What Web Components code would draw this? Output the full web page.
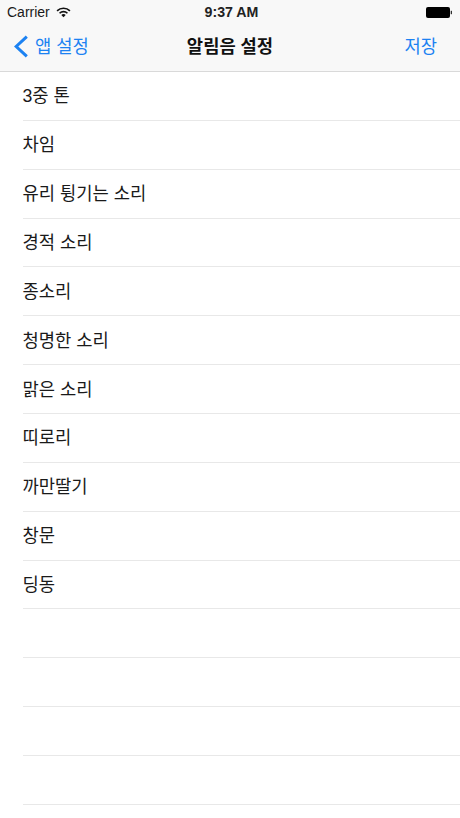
<!DOCTYPE html>
<html lang="ko">
<head>
<meta charset="utf-8">
<title>알림음 설정</title>
<style>
  html, body { margin: 0; height: 100%; background: #fff; overflow: hidden; }
  body { font-family: "Liberation Sans", "Noto Sans CJK KR", sans-serif; }
</style>
</head>
<body>
<nav-header title="알림음 설정" back="앱 설정" action="저장"></nav-header>
<sound-list>
  <sound-row>3중 톤</sound-row>
  <sound-row>차임</sound-row>
  <sound-row>유리 튕기는 소리</sound-row>
  <sound-row>경적 소리</sound-row>
  <sound-row>종소리</sound-row>
  <sound-row>청명한 소리</sound-row>
  <sound-row>맑은 소리</sound-row>
  <sound-row>띠로리</sound-row>
  <sound-row>까만딸기</sound-row>
  <sound-row>창문</sound-row>
  <sound-row>딩동</sound-row>
  <sound-row></sound-row>
  <sound-row></sound-row>
  <sound-row></sound-row>
  <sound-row></sound-row>
</sound-list>

<script>
class StatusBar extends HTMLElement {
  constructor(){
    super();
    this.attachShadow({mode: 'open'});
    this.shadowRoot.innerHTML = `
      <style>
        :host {
          display: grid;
          grid-template-columns: 1fr auto 1fr;
          align-items: center;
          height: 24px;
          padding: 0 8px 0 7px;
          font-size: 14px;
          color: #1a1a1a;
        }
        .left { display: flex; align-items: center; gap: 6px; }
        .time { font-weight: 700; font-size: 14.2px; color: #222; margin-left: 4px; }
        .right { display: flex; justify-content: flex-end; }
        svg { display: block; }
      </style>
      <div class="left">
        <span>Carrier</span>
        <svg width="15" height="11" viewBox="0 0 16 12">
          <path d="M1 4.2a10 10 0 0 1 14 0" fill="none" stroke="#111" stroke-width="1.8"/>
          <path d="M3.7 6.8a6.2 6.2 0 0 1 8.6 0" fill="none" stroke="#111" stroke-width="1.8"/>
          <path d="M8 11.2 5.6 8.8a3.4 3.4 0 0 1 4.8 0z" fill="#111"/>
        </svg>
      </div>
      <span class="time">9:37 AM</span>
      <div class="right">
        <svg width="26" height="11" viewBox="0 0 26 11">
          <rect x="0" y="0" width="24" height="11" rx="2" fill="#000"/>
          <rect x="24.7" y="3.8" width="1.3" height="3.4" fill="#333"/>
        </svg>
      </div>
    `;
  }
}
customElements.define('status-bar', StatusBar);

class NavHeader extends HTMLElement {
  constructor(){
    super();
    this.attachShadow({mode: 'open'});
  }

  connectedCallback(){
    this.shadowRoot.innerHTML = `
      <style>
        :host {
          display: block;
          background: #f8f8f8;
          border-bottom: 1px solid #d9d9d9;
          box-sizing: border-box;
          height: 72px;
        }
        .bar {
          display: grid;
          grid-template-columns: 1fr auto 1fr;
          align-items: center;
          height: 42px;
          font-size: 17.7px;
        }
        .back { display: flex; align-items: center; gap: 7px; padding-left: 14px; color: #1c82f2; }
        .back svg { display: block; margin-top: 3px; }
        .title { font-weight: 700; color: #111; }
        .action { justify-self: end; padding-right: 23px; color: #1c82f2; }
      </style>
      <status-bar></status-bar>
      <div class="bar">
        <div class="back">
          <svg width="14" height="23" viewBox="0 0 14 23">
            <path d="M12.8 1.6 2.2 11.5 12.8 21.4" fill="none" stroke="#1c82f2" stroke-width="3"/>
          </svg>
          <span>${this.getAttribute("back")}</span>
        </div>
        <span class="title">${this.getAttribute("title")}</span>
        <span class="action">${this.getAttribute("action")}</span>
      </div>
    `;
  }
}
customElements.define('nav-header', NavHeader);

class SoundList extends HTMLElement {
  constructor(){
    super();
    this.attachShadow({mode: 'open'});
    this.shadowRoot.innerHTML = `
      <style>
        :host { display: block; background: #fff; }
      </style>
      <slot></slot>
    `;
  }
}
customElements.define('sound-list', SoundList);

class SoundRow extends HTMLElement {
  constructor(){
    super();
    this.attachShadow({mode: 'open'});
    this.shadowRoot.innerHTML = `
      <style>
        :host { display: block; padding-left: 22.5px; }
        .cell {
          display: flex;
          align-items: center;
          box-sizing: border-box;
          height: 48.87px;
          padding-bottom: 3px;
          border-bottom: 1px solid #e8e8e8;
          font-size: 17.7px;
          color: #1a1a1a;
        }
      </style>
      <div class="cell"><slot></slot></div>
    `;
  }
}
customElements.define('sound-row', SoundRow);
</script>
</body>
</html>
